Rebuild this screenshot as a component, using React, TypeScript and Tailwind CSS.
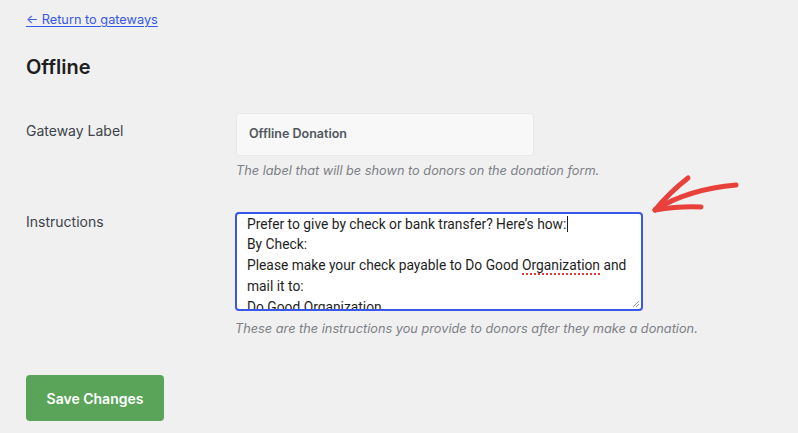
import React from "react";

function Arrow() {
  return (
    <svg
      className="pointer-events-none absolute left-0 top-0"
      width="798"
      height="433"
      viewBox="0 0 798 433"
      fill="none"
    >
      <g stroke="#e8403a" strokeWidth="5" strokeLinecap="round" strokeLinejoin="round">
        <path d="M656 209 Q690 189 736 185" />
        <path d="M688 178 Q670 192 655 210" />
        <path d="M655 210 Q680 206 701 207" />
      </g>
    </svg>
  );
}

export default function App() {
  return (
    <div className="relative min-h-screen bg-[#f0f0f0] pl-[26px] pt-[6px] font-['Inter',sans-serif] text-[#1e1e1e]">
      <a href="#" className="text-[12.75px] leading-[20px] text-[#3858e9] underline underline-offset-2">
        ← Return to gateways
      </a>
      <h1 className="mt-[23px] text-[20px] font-semibold leading-[28px]">Offline</h1>

      <div className="mt-[32px] grid grid-cols-[210px_1fr]">
        <div className="pt-[8px] text-[14px] leading-[20px] text-[#3c434a]">Gateway Label</div>
        <div>
          <div className="flex h-[43px] w-[298px] items-center rounded-[3px] border border-[#e8e8e8] bg-[#f8f8f8] px-[12px] text-[12.5px] font-semibold text-[#50575e]">
            Offline Donation
          </div>
          <p className="mt-[5px] text-[12.75px] italic leading-[20px] text-[#7d8087]">
            The label that will be shown to donors on the donation form.
          </p>
        </div>
      </div>

      <div className="mt-[31px] grid grid-cols-[209px_1fr]">
        <div className="pt-0 text-[14px] leading-[20px] text-[#3c434a]">Instructions</div>
        <div>
          <div className="relative h-[99px] w-[408px] overflow-hidden rounded-[4px] border-2 border-[#3858e9] bg-white pl-[10px] pr-[8px]">
            <div className="-mt-[1.5px] whitespace-nowrap font-['Roboto',sans-serif] text-[13.8px] leading-[20.75px] text-[#1e1e1e]">
              <div>
                Prefer to give by check or bank transfer? Here’s how:
                <span className="ml-[1px] inline-block h-[16px] w-[1px] translate-y-[3px] bg-[#1e1e1e]" />
              </div>
              <div>By Check:</div>
              <div>
                Please make your check payable to Do Good{" "}
                <span className="underline decoration-[#e53935] decoration-dotted decoration-[1.5px] underline-offset-[3px]">
                  Organization
                </span>{" "}
                and
              </div>
              <div>mail it to:</div>
              <div>Do Good Organization</div>
            </div>
            <svg className="absolute bottom-[1px] right-[1px]" width="9" height="9" viewBox="0 0 9 9">
              <path d="M8 2 L2 8 M8 5 L5 8" stroke="#9a9a9a" strokeWidth="1" />
            </svg>
          </div>
          <p className="mt-[8px] text-[12.75px] italic leading-[20px] text-[#7d8087]">
            These are the instructions you provide to donors after they make a donation.
          </p>
        </div>
      </div>

      <button className="mt-[36px] flex h-[46px] w-[138px] items-center justify-center rounded-[4px] bg-[#5aa45a] text-[14px] font-semibold text-white">
        Save Changes
      </button>

      <Arrow />
    </div>
  );
}
